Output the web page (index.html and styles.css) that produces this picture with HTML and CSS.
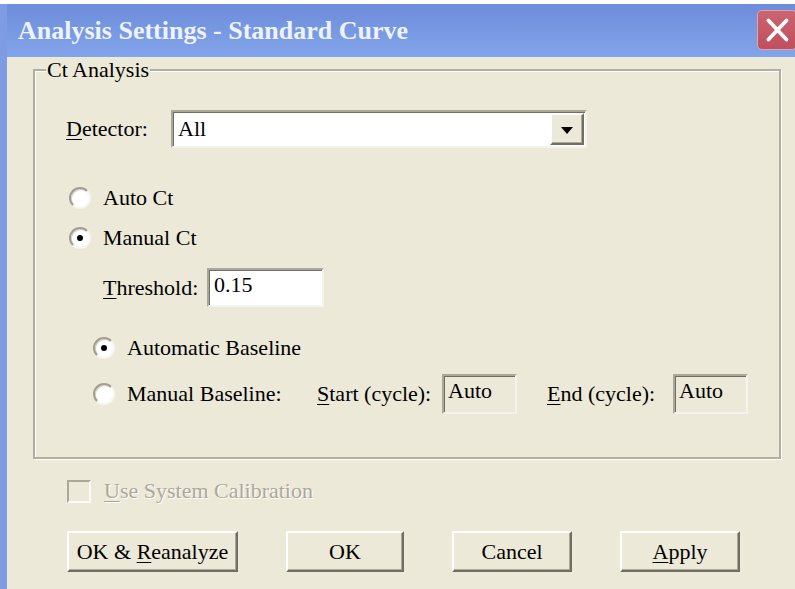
FILE: index.html
```html
<!DOCTYPE html>
<html lang="en">
<head>
<meta charset="utf-8">
<title>Analysis Settings - Standard Curve</title>
<link rel="stylesheet" href="styles.css">
</head>
<body>
<div class="window">
  <div class="titlebar">
    <span class="title">Analysis Settings - Standard Curve</span>
    <button class="close" aria-label="Close">
      <svg viewBox="0 0 40 40" width="40" height="40" aria-hidden="true">
        <path d="M11 10 L30 30 M30 10 L11 30" stroke="#fff" stroke-width="4" stroke-linecap="round" fill="none"/>
      </svg>
    </button>
  </div>

  <div class="content">
    <fieldset class="group">
      <legend>Ct Analysis</legend>

      <div class="row detector-row">
        <span class="lbl detector-lbl"><u>D</u>etector:</span>
        <div class="combo">
          <span class="combo-value">All</span>
          <span class="combo-btn"><span class="arrow"></span></span>
        </div>
      </div>

      <div class="row radio-row auto-ct">
        <span class="radio"></span>
        <span class="lbl">Auto Ct</span>
      </div>
      <div class="row radio-row manual-ct">
        <span class="radio checked"></span>
        <span class="lbl">Manual Ct</span>
      </div>

      <div class="row threshold-row">
        <span class="lbl threshold-lbl"><u>T</u>hreshold:</span>
        <div class="field threshold">0.15</div>
      </div>

      <div class="row radio-row sub auto-base">
        <span class="radio checked"></span>
        <span class="lbl">Automatic Baseline</span>
      </div>
      <div class="row radio-row sub manual-base">
        <span class="radio"></span>
        <span class="lbl mb-lbl">Manual Baseline:</span>
        <span class="lbl start-lbl"><u>S</u>tart (cycle):</span>
        <div class="field cycle">Auto</div>
        <span class="lbl end-lbl"><u>E</u>nd (cycle):</span>
        <div class="field cycle">Auto</div>
      </div>
    </fieldset>

    <div class="row check-row">
      <span class="checkbox"></span>
      <span class="lbl disabled"><u>U</u>se System Calibration</span>
    </div>

    <div class="buttons">
      <button class="btn wide">OK &amp; <u>R</u>eanalyze</button>
      <button class="btn ok">OK</button>
      <button class="btn">Cancel</button>
      <button class="btn"><u>A</u>pply</button>
    </div>
  </div>
</div>
</body>
</html>
```

FILE: styles.css
```css
* { box-sizing: border-box; }

html, body {
  margin: 0;
  padding: 0;
  background: #ffffff;
  overflow: hidden;
}

body {
  font-family: "Liberation Serif", "DejaVu Serif", "Times New Roman", serif;
  font-size: 22px;
  line-height: 26px;
  color: #000;
}

button { font-family: "Liberation Serif", "DejaVu Serif", "Times New Roman", serif; }

u { text-decoration: underline; text-underline-offset: 3px; text-decoration-thickness: 1px; }

.window {
  margin-top: 4px;
  height: 585px;
  width: 795px;
  background: #ece9d8;
  border-left: 7px solid #7d9ce4;
  display: flex;
  flex-direction: column;
}

/* ---- title bar ---- */
.titlebar {
  height: 53px;
  flex: none;
  display: flex;
  align-items: center;
  padding-left: 11px;
  background: linear-gradient(#6d8cdb 0%, #7697e1 45%, #83a5ea 100%);
  overflow: hidden;
}

.title {
  font-weight: bold;
  font-size: 26px;
  color: #eef2fc;
  white-space: nowrap;
}

.close {
  margin-left: auto;
  margin-right: -2px;
  align-self: flex-start;
  margin-top: 6px;
  width: 40px;
  height: 40px;
  padding: 0;
  border: 1px solid #dca4ad;
  border-radius: 5px;
  background: linear-gradient(#cc6470, #bf4f5c);
  display: flex;
  align-items: center;
  justify-content: center;
}

.close svg { display: block; }

/* ---- dialog body ---- */
.content {
  flex: 1;
  padding: 0 14px 0 26px;
  display: flex;
  flex-direction: column;
}

.group {
  margin: 0;
  padding: 0 0 0 31px;
  height: 402px;
  border: 2px solid #b2af9f;
  box-shadow: inset 1px 1px 0 #fff, 1px 1px 0 #fff;
  display: flex;
  flex-direction: column;
  min-width: 0;
}

.group legend {
  margin-left: -20px;
  padding: 0 1px;
  background: #ece9d8;
  line-height: 26px;
}

.row {
  display: flex;
  align-items: center;
  white-space: nowrap;
}

.lbl { display: inline-block; }

/* detector combo */
.detector-row {
  margin-top: 27px;
  height: 38px;
}

.detector-lbl { width: 105px; }

.combo {
  width: 416px;
  height: 38px;
  background: #fff;
  border: 2px solid;
  border-color: #aca899 #f4f3ee #f4f3ee #aca899;
  box-shadow: inset 1px 1px 0 #716f64;
  display: flex;
  align-items: center;
  padding: 1px 1px 1px 3px;
}

.combo-value { flex: 1; padding-left: 2px; }

.combo-btn {
  width: 34px;
  height: 32px;
  background: #ece9d8;
  border: 2px solid;
  border-color: #fff #716f64 #716f64 #fff;
  box-shadow: inset -1px -1px 0 #aca899;
  display: flex;
  align-items: center;
  justify-content: center;
}

.arrow {
  width: 0;
  height: 0;
  border-left: 6px solid transparent;
  border-right: 6px solid transparent;
  border-top: 7px solid #000;
  margin-top: 2px;
}

/* radio buttons */
.radio-row { height: 40px; padding-left: 3px; }
.radio-row .lbl { margin-left: 12px; }

.auto-ct { margin-top: 30px; }

.radio {
  width: 22px;
  height: 22px;
  flex: none;
  border-radius: 50%;
  background: #fff;
  border: 2px solid;
  border-color: #a19e8f #f7f6f0 #f7f6f0 #a19e8f;
  box-shadow: inset 1px 1px 0 #d6d3c6;
  display: flex;
  align-items: center;
  justify-content: center;
}

.radio.checked::after {
  content: "";
  width: 6px;
  height: 6px;
  border-radius: 50%;
  background: #000;
}

/* threshold */
.threshold-row {
  margin-top: 10px;
  height: 39px;
  padding-left: 37px;
}

.threshold-lbl { width: 104px; }

.field {
  height: 39px;
  border: 2px solid;
  border-color: #aca899 #f4f3ee #f4f3ee #aca899;
  box-shadow: inset 1px 1px 0 #716f64;
  padding: 2px 0 0 5px;
  display: flex;
  align-items: flex-start;
}

.threshold { width: 117px; background: #fff; }

/* baseline options */
.sub { padding-left: 27px; }
.auto-base { margin-top: 21px; }

.manual-base {
  margin-top: 6px;
  height: 40px;
}

.mb-lbl { width: 190px; }
.manual-base .start-lbl { margin-left: 0; width: 125px; }
.manual-base .end-lbl { margin-left: 30px; width: 126px; }

.cycle {
  width: 75px;
  height: 40px;
  background: #ece9d8;
  padding-left: 4px;
}

/* calibration checkbox */
.check-row {
  margin-top: 19px;
  padding-left: 34px;
  height: 26px;
}

.checkbox {
  width: 24px;
  height: 23px;
  flex: none;
  border: 2px solid;
  border-color: #aca899 #fbfaf6 #fbfaf6 #aca899;
  background: #ece9d8;
}

.disabled {
  margin-left: 13px;
  color: #aca899;
  text-shadow: 1px 1px 0 #fff;
}

/* command buttons */
.buttons {
  margin-top: 27px;
  padding-left: 34px;
  display: flex;
  gap: 48px;
}

.btn {
  font: inherit;
  color: #000;
  height: 41px;
  width: 120px;
  padding: 0;
  background: #ece9d8;
  border: 2px solid;
  border-color: #fff #716f64 #716f64 #fff;
  box-shadow: inset -1px -1px 0 #aca899;
  white-space: nowrap;
}

.btn.wide { width: 171px; }
.btn.ok { width: 118px; }
```
